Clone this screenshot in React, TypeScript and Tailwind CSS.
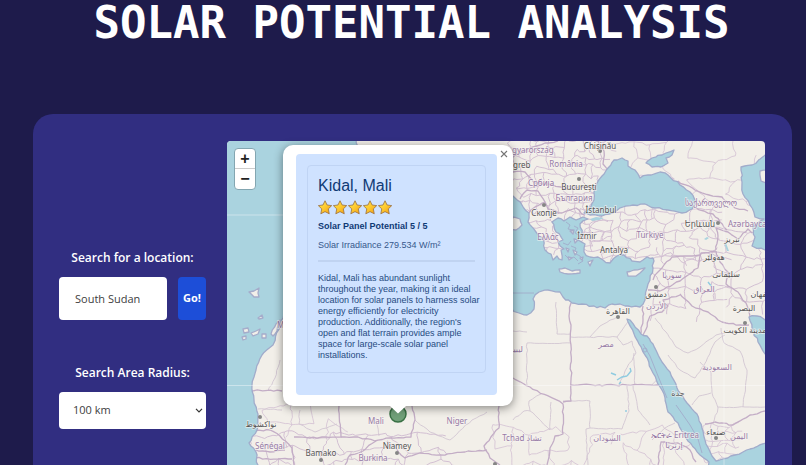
import React from "react";

type Point = [number, number];

function makeRandom(seed: number) {
  let s = seed;
  return () => {
    s = (s * 16807) % 2147483647;
    return s / 2147483647;
  };
}

// Adds small bends between the given points so that coasts look natural.
function rough(points: Point[], amp: number, seed: number, closed = true) {
  const rnd = makeRandom(seed);
  let d = `M${points[0][0]} ${points[0][1]}`;
  const count = closed ? points.length : points.length - 1;
  for (let i = 0; i < count; i++) {
    const [x1, y1] = points[i];
    const [x2, y2] = points[(i + 1) % points.length];
    const n = Math.max(1, Math.round(Math.hypot(x2 - x1, y2 - y1) / 4));
    for (let k = 1; k <= n; k++) {
      const j = k === n ? 0 : amp;
      const x = x1 + ((x2 - x1) * k) / n + (rnd() - 0.5) * j;
      const y = y1 + ((y2 - y1) * k) / n + (rnd() - 0.5) * j;
      d += `L${x.toFixed(1)} ${y.toFixed(1)}`;
    }
  }
  return closed ? d + "Z" : d;
}

// A net of irregular cells: the provinces of a region.
function provinces(x0: number, y0: number, x1: number, y1: number, cell: number, seed: number) {
  const rnd = makeRandom(seed);
  const cols = Math.ceil((x1 - x0) / cell);
  const rows = Math.ceil((y1 - y0) / cell);
  const v: Point[][] = [];
  for (let r = 0; r <= rows; r++) {
    v.push([]);
    for (let c = 0; c <= cols; c++) {
      v[r].push([x0 + (c + (rnd() - 0.5) * 0.8) * cell, y0 + (r + (rnd() - 0.5) * 0.8) * cell]);
    }
  }
  let d = "";
  for (let r = 0; r < rows; r++) {
    for (let c = 0; c < cols; c++) {
      if (rnd() > 0.15) d += rough([v[r][c], v[r][c + 1]], 2.6, 11 + r * 31 + c * 7, false);
      if ((r + c) % 2 === 0 || rnd() > 0.6) d += rough([v[r][c], v[r + 1][c]], 2.6, 17 + r * 13 + c * 5, false);
    }
  }
  return d;
}

const seas: { pts: Point[]; amp: number }[] = [
  { amp: 1.6, pts: [[220, 136], [354, 136], [360, 150], [330, 200], [300, 290], [284, 314], [280, 325], [273, 345], [262, 355], [256, 370], [252, 385], [254, 400], [258, 414], [257, 430], [249, 443], [256, 452], [258, 470], [220, 470]] },
  { amp: 2.2, pts: [[505, 190], [514, 197], [522, 205], [529, 213], [528, 222], [536, 232], [543, 238], [545, 250], [551, 254], [553, 260], [557, 256], [562, 260], [561, 250], [564, 249], [558, 242], [563, 240], [556, 232], [552, 222], [558, 218], [564, 221], [570, 217], [576, 220], [583, 217], [588, 219], [580, 224], [582, 234], [578, 240], [585, 244], [584, 252], [590, 257], [598, 257], [603, 260], [610, 263], [617, 256], [624, 255], [632, 261], [640, 262], [647, 257], [653, 258], [653, 268], [648, 284], [645, 300], [640, 307], [628, 306], [620, 304], [612, 304], [605, 308], [594, 306], [582, 304], [572, 303], [563, 297], [560, 292], [548, 290], [539, 292], [533, 299], [534, 309], [527, 315], [519, 313], [511, 308], [500, 306]] },
  { amp: 2, pts: [[584, 213], [590, 209], [594, 200], [595, 188], [602, 176], [608, 168], [614, 160], [622, 158], [628, 161], [628, 166], [635, 170], [640, 178], [648, 175], [660, 172], [668, 175], [680, 185], [690, 192], [696, 203], [692, 209], [682, 213], [668, 210], [655, 208], [645, 204], [633, 205], [623, 207], [613, 213], [602, 216], [590, 215]] },
  { amp: 2, pts: [[646, 163], [652, 158], [662, 155], [674, 150], [672, 155], [666, 158], [668, 163], [661, 167], [652, 167]] },
  { amp: 2, pts: [[775, 150], [764, 156], [752, 165], [741, 167], [742, 182], [743, 194], [750, 205], [755, 217], [764, 219], [753, 227], [755, 237], [752, 246], [765, 250], [775, 250]] },
  { amp: 1.2, pts: [[641, 334], [647, 336], [653, 344], [662, 362], [670, 372], [677, 388], [687, 403], [697, 414], [702, 428], [706, 444], [712, 456], [716, 461], [735, 455], [750, 449], [775, 440], [775, 475], [708, 475], [709, 462], [700, 455], [686, 438], [678, 423], [668, 412], [664, 394], [653, 373], [645, 355], [639, 344], [627, 319], [630, 320]] },
  { amp: 2, pts: [[749, 317], [757, 316], [775, 324], [775, 360], [765, 354], [758, 342], [752, 328]] },
];

const islands: Point[][] = [
  [[559, 269], [565, 268], [572, 271], [580, 270], [580, 273], [568, 274], [560, 272]],
  [[627, 272], [634, 270], [645, 268], [640, 273], [636, 276], [628, 276]],
  [[513, 217], [520, 219], [522, 225], [516, 230], [510, 230]],
  [[570, 231], [574, 230], [573, 234]],
  [[574, 239], [578, 240], [575, 243]],
  [[566, 248], [569, 249], [568, 252]],
  [[573, 250], [577, 252], [575, 255]],
  [[568, 257], [572, 258], [569, 260]],
  [[588, 262], [593, 260], [590, 266]],
  [[580, 258], [583, 257], [582, 260]],
  [[760, 171], [768, 170], [768, 183], [761, 181]],
  [[249, 292], [254, 291], [259, 288], [258, 293], [259, 297], [254, 297]],
  [[258, 318], [262, 315], [263, 318], [259, 319]],
  [[243, 329], [248, 328], [249, 332], [244, 333]],
  [[242, 337], [246, 336], [246, 339], [243, 340]],
  [[251, 333], [256, 331], [260, 329], [258, 334], [253, 336]],
  [[262, 334], [266, 334], [266, 338], [262, 338]],
  [[271, 334], [276, 324], [280, 320], [277, 331], [273, 336]],
];

const countries: Point[][] = [
  [[513, 378], [530, 387], [563, 404], [563, 434], [555, 436], [550, 448], [547, 465]],
  [[571, 303], [569, 316], [571, 325], [571, 401], [563, 402]],
  [[571, 385], [650, 385], [668, 385]],
  [[643, 306], [643, 320], [640, 336]],
  [[643, 337], [650, 316], [662, 312], [668, 306], [663, 300], [680, 295]],
  [[653, 280], [658, 272], [662, 268], [672, 257], [700, 255]],
  [[648, 290], [660, 291], [680, 281], [698, 268], [701, 253], [716, 251]],
  [[680, 294], [692, 306], [708, 312], [722, 322], [740, 325], [749, 325]],
  [[716, 251], [720, 262], [728, 272], [726, 284], [738, 292], [746, 303], [750, 317]],
  [[716, 250], [718, 236], [716, 228], [728, 232], [738, 239], [748, 229], [752, 233]],
  [[696, 208], [704, 211], [713, 214], [720, 222], [727, 230]],
  [[678, 181], [695, 190], [709, 195], [722, 197], [735, 208], [748, 211]],
  [[513, 172], [525, 172], [534, 183], [548, 184], [565, 189], [584, 187], [596, 188]],
  [[513, 157], [530, 148], [545, 143], [558, 141]],
  [[528, 214], [535, 207], [545, 202], [548, 209], [562, 213], [576, 208], [584, 215]],
  [[520, 199], [527, 190], [538, 191], [545, 202]],
  [[598, 141], [604, 151], [603, 164], [609, 170]],
  [[696, 462], [690, 450], [678, 443], [661, 442], [658, 465]],
  [[705, 424], [715, 422], [733, 425], [750, 415], [765, 411]],
  [[250, 390], [282, 391]],
  [[256, 431], [270, 430], [280, 436], [292, 448], [294, 465]],
  [[294, 437], [310, 438], [341, 437], [339, 406]],
  [[341, 437], [358, 437], [375, 441], [390, 438], [411, 437], [415, 420], [412, 406]],
  [[376, 441], [363, 451], [350, 455], [345, 465]],
  [[387, 441], [396, 448], [405, 458], [420, 453], [440, 455], [465, 452], [487, 450]],
  [[499, 406], [499, 428], [484, 446], [490, 458], [500, 465]],
  [[256, 450], [270, 452], [285, 450]],
  [[256, 458], [278, 459], [292, 459]],
];

const regions: Point[][] = [
  [[527, 343], [571, 343]],
  [[527, 343], [527, 385]],
  [[556, 302], [557, 334], [571, 334]],
  [[513, 331], [527, 332]],
  [[571, 337], [617, 337], [629, 320]],
  [[590, 337], [600, 326], [617, 317]],
  [[617, 337], [623, 345], [632, 341], [636, 353], [625, 371], [619, 385]],
  [[634, 353], [635, 385]],
  [[563, 401], [590, 401], [590, 428], [586, 429], [588, 465]],
  [[590, 428], [622, 429], [629, 411], [627, 385]],
  [[633, 385], [638, 410], [650, 425]],
  [[529, 401], [530, 411], [538, 418], [550, 430], [551, 402]],
  [[529, 401], [541, 394]],
  [[513, 420], [524, 411], [530, 411]],
  [[655, 318], [666, 332], [676, 347], [688, 353], [700, 347], [716, 335], [725, 333]],
  [[668, 355], [680, 370], [695, 378], [704, 365], [715, 342], [725, 335]],
  [[721, 328], [724, 343], [740, 351], [747, 370], [743, 407]],
  [[700, 362], [711, 372], [712, 393], [718, 408], [713, 424]],
  [[718, 407], [765, 407]],
  [[692, 405], [699, 396], [711, 393]],
  [[651, 386], [661, 375]],
  [[258, 409], [282, 410]],
  [[268, 391], [275, 378], [280, 360]],
  [[376, 418], [379, 436]],
  [[415, 420], [430, 432], [450, 440], [472, 420], [487, 412]],
  [[300, 410], [299, 424], [315, 432], [337, 424]],
  [[652, 440], [665, 428], [675, 423]],
];

type Label = { x: number; y: number; t: string; city?: boolean; anchor?: "start" };

const labels: Label[] = [
  { x: 600, y: 149, t: "Chișinău", city: true },
  { x: 512, y: 153, t: "gyarország", anchor: "start" },
  { x: 513, y: 168, t: "greb", city: true, anchor: "start" },
  { x: 566, y: 167, t: "România" },
  { x: 541, y: 186, t: "Србија" },
  { x: 579, y: 190, t: "București", city: true },
  { x: 574, y: 201, t: "България" },
  { x: 544, y: 216, t: "Скопје", city: true },
  { x: 601, y: 213, t: "İstanbul", city: true },
  { x: 548, y: 240, t: "Ελλάς" },
  { x: 587, y: 239, t: "İzmir", city: true },
  { x: 614, y: 253, t: "Antalya", city: true },
  { x: 650, y: 238, t: "Türkiye" },
  { x: 711, y: 206, t: "საქართველო" },
  { x: 700, y: 227, t: "Երևան", city: true },
  { x: 728, y: 227, t: "Azərbaycan", anchor: "start" },
  { x: 732, y: 242, t: "تبریز", city: true },
  { x: 714, y: 260, t: "هەولێر", city: true },
  { x: 726, y: 277, t: "سلێمانی", city: true },
  { x: 672, y: 278, t: "سوريا" },
  { x: 656, y: 297, t: "دمشق", city: true },
  { x: 704, y: 292, t: "العراق" },
  { x: 763, y: 297, t: "اصفهان", city: true },
  { x: 744, y: 311, t: "البصرة", city: true },
  { x: 656, y: 309, t: "الأردن" },
  { x: 745, y: 333, t: "مدينة الكويت", city: true },
  { x: 618, y: 314, t: "القاهرة", city: true },
  { x: 606, y: 347, t: "مصر" },
  { x: 517, y: 352, t: "ليبيا" },
  { x: 717, y: 370, t: "السعودية" },
  { x: 678, y: 396, t: "جدة", city: true },
  { x: 607, y: 441, t: "السودان" },
  { x: 522, y: 441, t: "Tchad تشاد" },
  { x: 675, y: 438, t: "ኤርትራ Eritrea" },
  { x: 674, y: 448, t: "إرتريا" },
  { x: 716, y: 435, t: "صنعاء", city: true },
  { x: 739, y: 439, t: "اليمن" },
  { x: 376, y: 424, t: "Mali" },
  { x: 457, y: 424, t: "Niger" },
  { x: 397, y: 449, t: "Niamey", city: true },
  { x: 321, y: 456, t: "Bamako", city: true },
  { x: 373, y: 461, t: "Burkina" },
  { x: 270, y: 449, t: "Sénégal" },
  { x: 261, y: 427, t: "نواكشوط", city: true },
  { x: 277, y: 328, t: "M", anchor: "start" },
];

const dots: Point[] = [[600, 151], [579, 179], [544, 205], [718, 223], [656, 287], [618, 317], [745, 323], [716, 438], [397, 453], [321, 460], [260, 417], [495, 464]];

function WorldMap() {
  return (
    <svg viewBox="227 141 538 397" preserveAspectRatio="xMinYMin slice" className="block size-full" aria-hidden="true">
      <rect x="227" y="141" width="1200" height="800" fill="#f2efe9" />
      <g fill="none" stroke="#d3c0d3" strokeWidth="1">
        <path d={provinces(511, 140, 610, 256, 9, 7)} />
        <path d={provinces(584, 212, 716, 265, 9, 23)} />
        <path d={provinces(610, 138, 765, 200, 20, 91)} strokeWidth="0.8" />
        <path d={provinces(716, 228, 765, 312, 14, 41)} />
        <path d={provinces(655, 258, 722, 305, 15, 59)} />
        <path d={provinces(255, 435, 440, 470, 14, 65)} />
        <path d={provinces(270, 405, 340, 440, 20, 14)} strokeWidth="0.8" />
        <path d={provinces(500, 430, 690, 470, 18, 77)} strokeWidth="0.8" />
        <path d={provinces(706, 425, 735, 462, 7, 81)} strokeWidth="0.8" />
      </g>
      <g fill="none" stroke="#d3c6d2" strokeWidth="0.9">
        {regions.map((r, i) => (
          <path key={i} d={rough(r, 1.2, 200 + i, false)} />
        ))}
      </g>
      <g fill="none" stroke="#c3adc6" strokeWidth="1.3" strokeLinejoin="round">
        {countries.map((c, i) => (
          <path key={i} d={rough(c, 1.6, 300 + i, false)} />
        ))}
      </g>
      <g fill="#aad3df" stroke="#a1accb" strokeWidth="1.3" strokeLinejoin="round">
        {seas.map((s, i) => (
          <path key={i} d={rough(s.pts, s.amp, 40 + i)} />
        ))}
        <path d="M590 219l6 -2 8 1 -5 2 -7 1z M704 239l3 -2 2 1 -3 2z M724 243l2 0 3 8 -2 0z" stroke="none" />
      </g>
      <g fill="none" stroke="#a1accb" strokeWidth="0.9">
        <path d="M513 293h21M643 344l7 12 8 20 9 22M676 405l14 20 8 14 4 14" />
        <path d="M566 222l4 3 -2 4 5 1M574 226l4 2 -3 5 5 3M563 243l5 2 3 -4M571 246l5 2 -2 5 6 3 3 5 -5 3M565 255l4 4 5 -2 4 4" />
        <circle cx="645" cy="350" r="2" />
      </g>
      <g fill="none" stroke="#8fcbe0" strokeWidth="1.4">
        <path d="M611 373l5 2M617 380l5 -3 5 -1M627 376l4 -5 -1 -3M619 384l2 -2" />
        <path d="M626 410v2M708 282l4 5" />
      </g>
      <g fill="#f2efe9" stroke="#a5acca" strokeWidth="1.3" strokeLinejoin="round">
        {islands.map((p, i) => (
          <path key={i} d={rough(p, 1, 90 + i)} />
        ))}
      </g>
      <path d="M227 215H283M227 385.500H283M513 385.500H765M724 141V465" stroke="#ffffff" strokeOpacity="0.4" strokeWidth="1" />
      <g fill="#858585">
        {dots.map(([x, y]) => (
          <circle key={`${x}-${y}`} cx={x} cy={y} r="2" />
        ))}
      </g>
      <g
        className="font-['Noto_Sans','DejaVu_Sans',sans-serif] text-[8px]"
        stroke="#f8f5f2"
        strokeOpacity="0.7"
        strokeWidth="1.5"
        style={{ paintOrder: "stroke" }}
      >
        {labels.map((l) => (
          <text key={l.t} x={l.x} y={l.y} textAnchor={l.anchor ?? "middle"} fill={l.city ? "#555555" : "#967aa6"}>
            {l.t}
          </text>
        ))}
      </g>
      <circle cx="398" cy="414" r="8" fill="#71a079" stroke="#397044" strokeWidth="1.500" />
    </svg>
  );
}

function Star() {
  return (
    <svg viewBox="0 0 16 16" className="size-[15px] shrink-0" aria-hidden="true">
      <defs>
        <linearGradient id="gold" x1="0" y1="0" x2="1" y2="1">
          <stop offset="0" stopColor="#ffe94f" />
          <stop offset="0.5" stopColor="#fdc92f" />
          <stop offset="1" stopColor="#f39a12" />
        </linearGradient>
      </defs>
      <path
        d="M7.500 0.800 9.700 5.300 14.600 6 11 9.500 12 14.700 7.500 12.400 3 14.700 4 9.500 0.400 6 5.300 5.300Z"
        fill="url(#gold)"
        stroke="#94683a"
        strokeWidth="0.8"
        strokeLinejoin="round"
      />
    </svg>
  );
}

function Popup() {
  return (
    <section className="absolute top-1 left-14 w-[230px] rounded-[10px] bg-white pt-[9px] pr-4 pb-[11px] pl-[13px] font-['Liberation_Sans',Arial,sans-serif] text-[#0f3a75] shadow-[0_2px_10px_rgba(0,0,0,0.45)]">
      <button type="button" aria-label="Close popup" className="absolute top-0.5 right-0.5 flex size-3.5 items-center justify-center text-[#757575]">
        <svg viewBox="0 0 8 8" className="size-2" fill="none" stroke="currentColor" strokeWidth="1.100">
          <path d="M1 1 7 7M7 1 1 7" />
        </svg>
      </button>
      <div className="rounded bg-[#cfe2ff] px-[11px] pt-[11px] pb-[22px]">
        <div className="rounded border border-[#c0d4f4] px-2.5 pt-2.5 pb-[11px]">
          <h2 className="text-base leading-5">Kidal, Mali</h2>
          <div className="mt-[3px] flex h-4 items-center" role="img" aria-label="5 of 5 stars">
            <Star />
            <Star />
            <Star />
            <Star />
            <Star />
          </div>
          <p className="mt-1.5 text-[9px] leading-[11px] font-bold">Solar Panel Potential 5 / 5</p>
          <p className="mt-2 text-[9px] leading-[11px] text-[#36588c]">Solar Irradiance 279.534 W/m²</p>
          <hr className="mt-[9px] border-t-2 border-[#c0d3f1]" />
          <p className="-mr-1.5 mt-[11px] text-[9px] leading-[11px] text-[#264b82]">
            Kidal, Mali has abundant sunlight throughout the year, making it an ideal location for solar panels to
            harness solar energy efficiently for electricity production. Additionally, the region's open and flat
            terrain provides ample space for large-scale solar panel installations.
          </p>
        </div>
      </div>
      <svg viewBox="0 0 18 8" className="absolute top-full left-[106px] h-2 w-[18px]" aria-hidden="true">
        <path d="M1 0H17L9 7.500Z" fill="#ffffff" />
      </svg>
    </section>
  );
}

function SearchForm() {
  return (
    <form className="flex w-[147px] shrink-0 flex-col justify-center font-['Open_Sans','Noto_Sans',sans-serif]" onSubmit={(e) => e.preventDefault()}>
      <label htmlFor="place" className="text-center text-xs leading-4 font-semibold whitespace-nowrap text-white">
        Search for a location:
      </label>
      <div className="mt-[11px] flex gap-[11px]">
        <input
          id="place"
          type="text"
          defaultValue="South Sudan"
          className="h-[43px] w-full min-w-0 flex-1 rounded bg-white px-4 text-[11px] text-[#404040]"
        />
        <button type="submit" className="w-7 shrink-0 rounded bg-[#1d4ed8] text-[11px] font-bold text-white">
          Go!
        </button>
      </div>
      <label htmlFor="radius" className="mt-[45px] text-center text-xs leading-4 font-semibold whitespace-nowrap text-white">
        Search Area Radius:
      </label>
      <div className="relative mt-[11px]">
        <select id="radius" defaultValue="100" className="h-[37px] w-full appearance-none rounded bg-white px-3.5 text-[11px] text-[#404040]">
          <option value="50">50 km</option>
          <option value="100">100 km</option>
          <option value="200">200 km</option>
        </select>
        <svg viewBox="0 0 8 5" className="pointer-events-none absolute top-4 right-[3px] h-[5px] w-2" fill="none" stroke="#333333" strokeWidth="1.200" aria-hidden="true">
          <path d="M1 0.800 4 3.800 7 0.800" />
        </svg>
      </div>
    </form>
  );
}

export default function App() {
  return (
    <main className="h-screen overflow-hidden bg-[#1e1b4b] pr-3.5 pl-[33px]">
      <h1 className="-mr-3.5 h-[114px] pr-4 text-center font-['DejaVu_Sans_Mono',monospace] text-[44px] leading-[46px] font-bold whitespace-nowrap text-white">
        SOLAR POTENTIAL ANALYSIS
      </h1>
      <div className="flex gap-[21px] rounded-[20px] bg-[#312e81] py-[27px] pr-[27px] pl-[26px]">
        <SearchForm />
        <div className="relative h-[397px] min-w-0 flex-1">
          <div className="size-full overflow-hidden rounded">
            <WorldMap />
          </div>
          <div className="absolute top-[7px] left-[7px] flex w-[22px] flex-col overflow-hidden rounded-sm border border-[#83a6b1] bg-white font-['Liberation_Sans',sans-serif] text-base font-bold text-[#222222]">
            <button type="button" aria-label="Zoom in" className="h-5 border-b border-[#cccccc] leading-5">
              +
            </button>
            <button type="button" aria-label="Zoom out" className="h-5 leading-5">
              −
            </button>
          </div>
          <Popup />
        </div>
      </div>
    </main>
  );
}
